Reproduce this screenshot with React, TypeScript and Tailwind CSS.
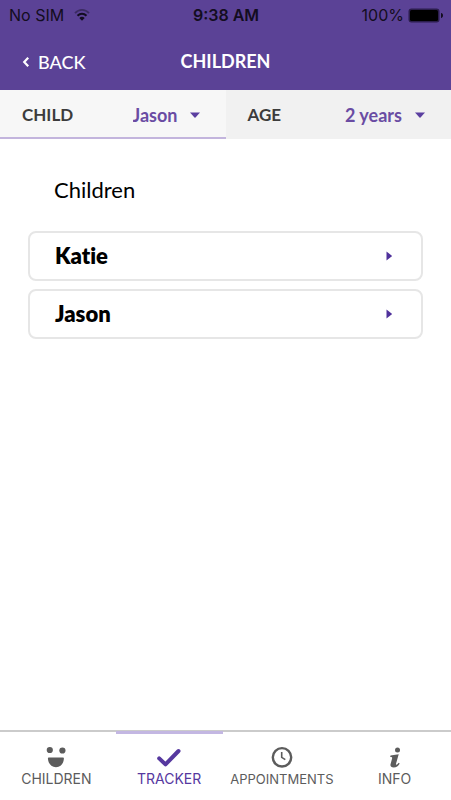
import React, { useState } from 'react';

type TabId = 'children' | 'tracker' | 'appointments' | 'info';

const CHILDREN = ['Katie', 'Jason'];
const AGES = ['1 year', '2 years', '3 years'];

const TABS: { id: TabId; label: string; size: string }[] = [
  { id: 'children', label: 'CHILDREN', size: 'text-sm' },
  { id: 'tracker', label: 'TRACKER', size: 'text-sm' },
  { id: 'appointments', label: 'APPOINTMENTS', size: 'text-[13px]' },
  { id: 'info', label: 'INFO', size: 'text-sm' },
];

const TabIcon: React.FC<{ id: TabId }> = ({ id }) => (
  <svg viewBox="0 0 24 22" className="h-[22px] w-6" fill="currentColor" aria-hidden="true">
    {id === 'children' && (
      <>
        <circle cx="5.8" cy="4" r="3.1" />
        <circle cx="18.4" cy="4.5" r="3.1" />
        <path d="M4.700 11.500h14.400c.5 0 .8.3.8.8-.1 5-3 8.900-7.900 8.900s-7.900-3.900-8.100-8.900c0-.5.3-.8.800-.8z" />
      </>
    )}
    {id === 'tracker' && (
      <path
        d="M2.200 12.400l6.300 6L21.500 5"
        fill="none"
        stroke="currentColor"
        strokeWidth="4"
        strokeLinecap="round"
        strokeLinejoin="round"
      />
    )}
    {id === 'appointments' && (
      <g fill="none" stroke="currentColor">
        <circle cx="12" cy="11.300" r="9.200" strokeWidth="2.400" />
        <path d="M11.700 6v5.400l3.600 2.300" strokeWidth="1.600" />
      </g>
    )}
    {id === 'info' && (
      <>
        <circle cx="14.500" cy="4" r="2.500" />
        <path d="M7.500 9.600l8.200-1.400-2.600 9.300c-.2.900 0 1.300.4 1.200.7-.1 1.400-.9 2.100-1.900l1.100.7c-1.400 2.700-3.300 4.100-6 4.100-2.700 0-3.700-1.500-3.100-3.700l1.500-5.500c.2-.9 0-1.300-.9-1.300H7.200z" />
      </>
    )}
  </svg>
);

interface FilterProps {
  id: string;
  label: string;
  value: string;
  options: string[];
  onChange: (value: string) => void;
  className: string;
}

const Filter: React.FC<FilterProps> = ({ id, label, value, options, onChange, className }) => (
  <div className={`flex h-[49px] flex-1 items-center justify-between border-b-2 pt-[2px] pr-[26px] pl-[22px] ${className}`}>
    <label htmlFor={id} className="text-[17px] leading-6 font-bold text-[#3c3c3c]">
      {label}
    </label>
    <div className="flex items-center gap-3">
      <select
        id={id}
        value={value}
        onChange={(e) => onChange(e.target.value)}
        className="appearance-none bg-transparent pl-1 text-lg leading-6 font-bold text-[#6a4ca3] outline-none"
      >
        {options.map((option) => (
          <option key={option}>{option}</option>
        ))}
      </select>
      <svg viewBox="0 0 10 6" className="h-[6px] w-[10px]" fill="#5b3fa0" aria-hidden="true">
        <path d="M0 .5h10L5.500 5.600a.7.7 0 0 1-1 0z" />
      </svg>
    </div>
  </div>
);

const App: React.FC = () => {
  const [child, setChild] = useState('Jason');
  const [age, setAge] = useState('2 years');
  const [tab, setTab] = useState<TabId>('tracker');

  return (
    <div className="flex min-h-screen flex-col bg-white font-[Lato,sans-serif] text-black">
      <header className="bg-[#5b4296]">
        {/* Status bar */}
        <div className="grid h-[30px] grid-cols-[1fr_auto_1fr] items-center pr-2 pl-[9px] font-[Inter,sans-serif] text-base text-[#130d20]">
          <div className="flex items-center gap-[10px]">
            <span>No SIM</span>
            <svg viewBox="0 0 16 12" className="h-3 w-4" fill="none" aria-hidden="true">
              <path d="M1 4.200C5-.2 11-.2 15 4.200" stroke="#3b2b62" strokeWidth="1.800" />
              <path d="M3.500 6.800c2.700-2.700 6.300-2.700 9 0" stroke="currentColor" strokeWidth="2" />
              <path d="M5.300 8.900c1.600-1.500 3.800-1.500 5.400 0L8 11.800z" fill="currentColor" />
            </svg>
          </div>
          <span className="font-semibold">9:38 AM</span>
          <div className="flex items-center justify-end gap-1">
            <span>100%</span>
            <svg viewBox="0 0 35 15" className="h-[15px] w-[35px]" aria-hidden="true">
              <rect x=".5" y=".5" width="31" height="14" rx="3" fill="#2b1d4c" />
              <rect x="2" y="2" width="28" height="11" rx="1.500" fill="#000" />
              <path d="M33 5c1.300.3 2 1.200 2 2.500S34.300 9.700 33 10z" fill="#130d20" />
            </svg>
          </div>
        </div>

        <div className="grid h-[60px] grid-cols-[1fr_auto_1fr] items-center px-[22px] pt-[2px] text-white">
          <button type="button" className="flex items-center gap-2 justify-self-start pt-[2px] text-lg leading-6 font-medium">
            <svg viewBox="0 0 8 12" className="h-3 w-2" fill="none" aria-hidden="true">
              <path d="M6.200 1.700L2.200 6l4 4.300" stroke="currentColor" strokeWidth="2.200" />
            </svg>
            BACK
          </button>
          <h1 className="text-lg leading-6 font-bold">CHILDREN</h1>
        </div>
      </header>

      <div className="flex">
        <Filter
          id="child"
          label="CHILD"
          value={child}
          options={CHILDREN}
          onChange={setChild}
          className="border-[#c3b5dd] bg-[#f7f7f7]"
        />
        <Filter
          id="age"
          label="AGE"
          value={age}
          options={AGES}
          onChange={setAge}
          className="border-[#f1f1f1] bg-[#f1f1f1]"
        />
      </div>

      <main className="flex-1 px-7 pt-9">
        <h2 className="pl-[26px] text-[22px] leading-[30px]">Children</h2>
        <ul className="mt-[26px] flex flex-col gap-2">
          {CHILDREN.map((name) => (
            <li key={name}>
              <button
                type="button"
                onClick={() => setChild(name)}
                className="flex h-[50px] w-full items-center justify-between rounded-lg border-2 border-[#e6e6e6] pr-[29px] pl-[25px] text-[22px] leading-7 font-extrabold [font-variant-ligatures:none]"
              >
                {name}
                <svg viewBox="0 0 6 10" className="h-[10px] w-[6px]" fill="#4f319b" aria-hidden="true">
                  <path d="M.5.500L5.600 4.500a.7.7 0 0 1 0 1L.5 9.500z" />
                </svg>
              </button>
            </li>
          ))}
        </ul>
      </main>

      <nav className="grid h-[70px] grid-cols-4 border-t-2 border-[#cbcbcb] font-[Inter,sans-serif]">
        {TABS.map(({ id, label, size }) => (
          <button
            key={id}
            type="button"
            onClick={() => setTab(id)}
            className={`relative flex flex-col items-center pt-[14px] ${size} ${
              tab === id ? 'text-[#56389f]' : 'text-[#5c5c5c]'
            }`}
          >
            {tab === id && <span className="absolute inset-x-[3px] -top-px h-[3px] bg-[#c3b7e2]" />}
            <TabIcon id={id} />
            <span className="leading-[22px]">{label}</span>
          </button>
        ))}
      </nav>
    </div>
  );
};

export default App;
